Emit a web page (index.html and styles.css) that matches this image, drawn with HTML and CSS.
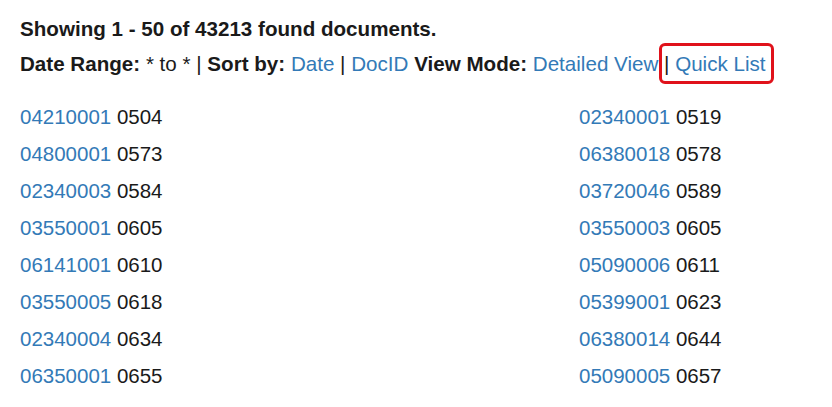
FILE: index.html
```html
<!DOCTYPE html>
<html>
<head>
<meta charset="utf-8">
<link rel="stylesheet" href="styles.css">
</head>
<body>
<div class="page">
  <div class="summary">Showing 1 - 50 of 43213 found documents.</div>
  <div class="controls">
    <b>Date Range:</b> * to * | <b>Sort by:</b> <a href="#">Date</a> | <a href="#">DocID</a> <b>View Mode:</b> <a href="#">Detailed View</a> <span class="hl">| <a href="#">Quick List</a></span>
  </div>
  <div class="list">
    <div class="item"><a href="#">04210001</a> 0504</div>
    <div class="item"><a href="#">02340001</a> 0519</div>
    <div class="item"><a href="#">04800001</a> 0573</div>
    <div class="item"><a href="#">06380018</a> 0578</div>
    <div class="item"><a href="#">02340003</a> 0584</div>
    <div class="item"><a href="#">03720046</a> 0589</div>
    <div class="item"><a href="#">03550001</a> 0605</div>
    <div class="item"><a href="#">03550003</a> 0605</div>
    <div class="item"><a href="#">06141001</a> 0610</div>
    <div class="item"><a href="#">05090006</a> 0611</div>
    <div class="item"><a href="#">03550005</a> 0618</div>
    <div class="item"><a href="#">05399001</a> 0623</div>
    <div class="item"><a href="#">02340004</a> 0634</div>
    <div class="item"><a href="#">06380014</a> 0644</div>
    <div class="item"><a href="#">06350001</a> 0655</div>
    <div class="item"><a href="#">05090005</a> 0657</div>
  </div>
</div>
</body>
</html>
```
FILE: styles.css
```css
html, body {
  margin: 0;
  padding: 0;
  background: #fff;
}
body {
  font-family: "Liberation Sans", Arial, sans-serif;
  color: #1a1a1a;
}
.page {
  padding: 14px 0 0 20px;
}
.summary {
  font-weight: bold;
  font-size: 20.6px;
  line-height: 30px;
}
.controls {
  font-size: 20.6px;
  line-height: 30px;
  margin-top: 5px;
}
.controls b {
  font-weight: bold;
}
a {
  color: #337ab7;
  text-decoration: none;
}
.hl {
  position: relative;
}
.hl::after {
  content: "";
  position: absolute;
  left: -5px;
  right: -8px;
  top: -9px;
  bottom: -9px;
  border: 3px solid #e0121b;
  border-radius: 6px;
}
.list {
  display: grid;
  grid-template-columns: 559px auto;
  margin-top: 19px;
}
.item {
  font-size: 20.5px;
  line-height: 37px;
}
```
